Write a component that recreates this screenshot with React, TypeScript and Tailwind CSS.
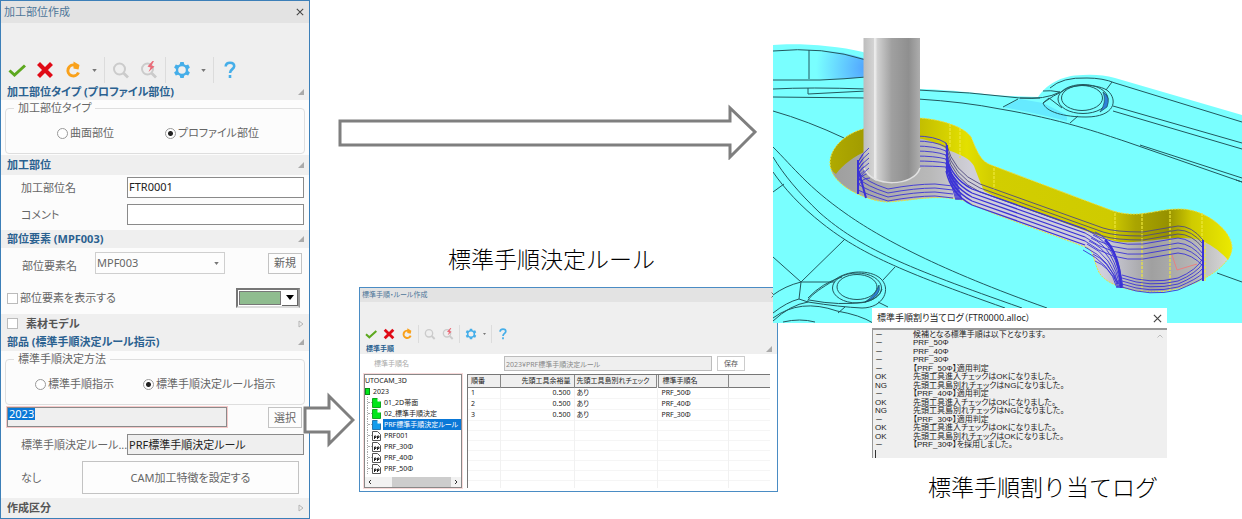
import { clsx } from "clsx";
import type { FC, ReactNode } from "react";

const ICON_BUTTON = "flex shrink-0 items-center justify-center";

type IconProps = { className: string };

const CheckIcon: FC<IconProps> = ({ className }) => (
  <svg viewBox="0 0 18 18" className={className} fill="none" stroke="#5da81f" strokeWidth="3">
    <path d="M1.5 9.5 6.5 14 17 4.5" />
  </svg>
);

const CrossIcon: FC<IconProps> = ({ className }) => (
  <svg viewBox="0 0 18 18" className={className} fill="none" stroke="#e00a16" strokeWidth="4.2">
    <path d="M4 4 14 14M14 4 4 14" strokeLinecap="square" />
  </svg>
);

const RedoIcon: FC<IconProps> = ({ className }) => (
  <svg viewBox="0 0 18 18" className={className}>
    <path d="M11 4.2A5.500 5.500 0 1 0 14.500 11.500" fill="none" stroke="#f9a11b" strokeWidth="3" />
    <path d="M9.5 0.5 15.500 4 14.500 8.500 9.5 7.500Z" fill="#f9a11b" />
  </svg>
);

const SearchIcon: FC<IconProps & { bolt?: boolean }> = ({ className, bolt }) => (
  <svg viewBox="0 0 18 18" className={className} fill="none" stroke="#cbcbcb">
    <circle cx="7.5" cy="8" r="5.5" strokeWidth="2" />
    <path d="M11.5 12 16 16.500" strokeWidth="2.8" />
    {bolt && (
      <path d="M12.5 0 7.5 5.5 10.5 6.5 8.5 11 14.5 5.5 11.5 4.5 14 0Z" fill="#ea6b78" stroke="none" />
    )}
  </svg>
);

const GearIcon: FC<IconProps> = ({ className }) => (
  <svg viewBox="0 0 18 18" className={className} fill="#45aee9" fillRule="evenodd">
    <path d="M7.3 1h3.4l.5 2.3 1.7 1 2.3-.8 1.7 2.9-1.8 1.6v2l1.8 1.6-1.7 2.9-2.3-.8-1.7 1-.5 2.3H7.3l-.5-2.3-1.7-1-2.3.8-1.7-2.9L2.9 10V8L1.1 6.4l1.7-2.9 2.3.8 1.7-1zM9 5.2a3.8 3.8 0 1 0 0 7.6 3.8 3.8 0 0 0 0-7.6z" />
  </svg>
);

const HelpIcon: FC<IconProps> = ({ className }) => (
  <svg viewBox="0 0 18 18" className={className} fill="none" stroke="#45aee9" strokeWidth="2.6">
    <path d="M4.7 5.5C4.7 2.8 6.6 1.8 9 1.8s4.2 1.3 4.2 3.5C13.2 8.2 9 8.2 9 12" />
    <path d="M9 14v3" />
  </svg>
);

const Caret: FC<IconProps> = ({ className }) => (
  <svg viewBox="0 0 6 4" className={className} fill="#777">
    <path d="M0 0H6L3 4Z" />
  </svg>
);

const CloseIcon: FC<IconProps> = ({ className }) => (
  <svg viewBox="0 0 10 10" className={className} fill="none" stroke="#444" strokeWidth="1.3">
    <path d="M1 1 9 9M9 1 1 9" />
  </svg>
);

const Toolbar: FC<{ small?: boolean }> = ({ small }) => {
  const icon = small ? "size-3" : "size-[18px]";
  const group = clsx("flex h-full items-center", small ? "gap-[6px] px-[5px]" : "gap-[10px] px-[7px]");
  const divided = "border-l border-[#dcdcdc]";
  return (
    <div className={clsx("flex items-end", small ? "h-[41px]" : "h-[60px]")}>
      <div className={clsx("flex", small ? "h-[18px]" : "h-[26px]")}>
        <div className={group}>
          <button aria-label="OK" className={ICON_BUTTON}><CheckIcon className={icon} /></button>
          <button aria-label="Cancel" className={ICON_BUTTON}><CrossIcon className={icon} /></button>
          <button aria-label="Redo" className={ICON_BUTTON}><RedoIcon className={icon} /></button>
          {!small && <Caret className="h-[3px] w-[5px]" />}
        </div>
        <div className={clsx(group, divided)}>
          <button aria-label="Search" className={ICON_BUTTON}><SearchIcon className={icon} /></button>
          <button aria-label="Quick search" className={ICON_BUTTON}><SearchIcon className={icon} bolt /></button>
        </div>
        <div className={clsx(group, divided)}>
          <button aria-label="Settings" className={ICON_BUTTON}><GearIcon className={icon} /></button>
          <Caret className={small ? "h-[2px] w-[3px]" : "h-[3px] w-[5px]"} />
        </div>
        <div className={clsx(group, divided)}>
          <button aria-label="Help" className={ICON_BUTTON}><HelpIcon className={icon} /></button>
        </div>
      </div>
    </div>
  );
};

type SectionHeaderProps = { className: string; closed?: boolean; children: ReactNode };

const SectionHeader: FC<SectionHeaderProps> = ({ className, closed, children }) => (
  <div className={clsx("flex items-center justify-between bg-[#efefef] pr-[5px] pl-[6px]", className)}>
    <h3 className={clsx("flex items-center font-bold", closed ? "text-[#555]" : "text-[#2a6190]")}>
      {children}
    </h3>
    {closed ? (
      <svg viewBox="0 0 6 8" className="h-2 w-[6px]" fill="none" stroke="#b5b5b5">
        <path d="M1 1 5 4 1 7Z" />
      </svg>
    ) : (
      <svg viewBox="0 0 6 6" className="size-[6px]" fill="#aaa">
        <path d="M6 0V6H0Z" />
      </svg>
    )}
  </div>
);

const RadioGroup: FC<{ legend: string; name: string; options: string[]; indent: string }> = ({
  legend,
  name,
  options,
  indent,
}) => (
  <fieldset className="mx-1 h-[54px] rounded-sm border border-[#dedede]">
    <legend className="ml-2 px-1 leading-4">{legend}</legend>
    <div className={clsx("grid h-[34px] grid-cols-[108px_auto] items-center", indent)}>
      {options.map((option, i) => (
        <label key={option} className="flex items-center gap-[2px] whitespace-nowrap">
          <input
            type="radio"
            name={name}
            defaultChecked={i === 1}
            className="size-[11px] appearance-none rounded-full border border-[#999] bg-white checked:bg-[radial-gradient(circle,#222_0_2px,#fff_3px)]"
          />
          {option}
        </label>
      ))}
    </div>
  </fieldset>
);

const FIELD = "h-[21px] min-w-0 border border-[#8a8a8a] px-[1px] pb-[2px] text-[#222]";
const BUTTON = "border border-[#c3c3c3] bg-[#fdfdfd]";

const FeatureDialog: FC = () => (
  <section className="flex flex-col border border-[#3c7fb8] bg-[#fcfcfc] text-[11px] leading-4 text-[#666]">
    <header className="flex h-[22px] items-center justify-between bg-[#e3e3e3] pr-[5px] pl-[3px]">
      <h2 className="text-[#4d7699]">加工部位作成</h2>
      <button aria-label="Close"><CloseIcon className="size-2" /></button>
    </header>
    <div className="bg-[#efefef]"><Toolbar /></div>

    <SectionHeader className="h-[17px]">加工部位タイプ (プロファイル部位)</SectionHeader>
    <div className="pb-[1px]">
      <RadioGroup legend="加工部位タイプ" name="feature-type" options={["曲面部位", "プロファイル部位"]} indent="pl-[51px]" />
    </div>

    <SectionHeader className="h-5">加工部位</SectionHeader>
    <div className="flex flex-col gap-[6px] pt-[2px] pr-[5px] pb-[5px] pl-5">
      <div className="flex items-center">
        <label htmlFor="feature-name" className="w-[106px]">加工部位名</label>
        <input id="feature-name" defaultValue="FTR0001" className={clsx(FIELD, "flex-1 bg-white")} />
      </div>
      <div className="flex items-center">
        <label htmlFor="comment" className="w-[106px]">コメント</label>
        <input id="comment" className={clsx(FIELD, "flex-1 bg-white")} />
      </div>
    </div>

    <SectionHeader className="h-[18px]">部位要素 (MPF003)</SectionHeader>
    <div className="flex flex-col gap-[14px] pt-1 pr-[7px] pb-[6px] pl-[6px]">
      <div className="flex h-[22px] items-center justify-between">
        <label htmlFor="element-name" className="w-[74px] pt-[6px] pl-[15px] whitespace-nowrap">部位要素名</label>
        <div className="relative mr-auto ml-[14px]">
          <select id="element-name" className="h-[22px] w-[130px] appearance-none border border-[#cfcfcf] bg-[#fdfdfd] px-[1px]">
            <option>MPF003</option>
          </select>
          <Caret className="pointer-events-none absolute top-[10px] right-[6px] h-[3px] w-[5px]" />
        </div>
        <button className={clsx(BUTTON, "h-[21px] w-[34px]")}>新規</button>
      </div>
      <div className="flex h-5 items-center justify-between">
        <label className="flex items-center gap-[2px]">
          <input type="checkbox" className="size-[11px] appearance-none border border-[#bbb] bg-white" />
          部位要素を表示する
        </label>
        <button
          aria-label="Colour"
          className="mr-[2px] flex h-5 w-16 items-stretch border-2 border-t-[#777] border-r-[#999] border-b-[#ddd] border-l-[#777] bg-white"
        >
          <span className="m-[1px] flex-1 border border-[#777] bg-[#8fbc8f]" />
          <span className="flex w-4 items-center justify-center border-r border-b border-[#666]">
            <svg viewBox="0 0 8 5" className="h-[5px] w-2"><path d="M0 0H8L4 5Z" /></svg>
          </span>
        </button>
      </div>
    </div>

    <SectionHeader className="h-[19px]" closed>
      <label className="flex items-center gap-2">
        <input type="checkbox" className="size-[11px] appearance-none border border-[#bbb] bg-white" />
        素材モデル
      </label>
    </SectionHeader>
    <SectionHeader className="h-[18px]">部品 (標準手順決定ルール指示)</SectionHeader>
    <div className="pb-1">
      <RadioGroup
        legend="標準手順決定方法"
        name="method"
        options={["標準手順指示", "標準手順決定ルール指示"]}
        indent="pl-[29px]"
      />
      <div className="mt-[2px] flex h-5 justify-between pr-[7px] pl-[6px]">
        <div className="flex h-5 w-[220px] items-start border border-[#8a8a8a] bg-[#efefef] outline outline-[#f6c9c9]">
          <input
            aria-label="Folder"
            defaultValue="2023"
            className="h-3 w-[27px] bg-[#0a78d7] px-[1px] text-white"
          />
        </div>
        <button className={clsx(BUTTON, "h-[21px] w-[34px]")}>選択</button>
      </div>
      <div className="mt-[7px] flex items-center pr-[5px] pl-5">
        <label htmlFor="rule-name" className="w-[106px] whitespace-nowrap">標準手順決定ルール...</label>
        <input id="rule-name" readOnly value="PRF標準手順決定ルール" className={clsx(FIELD, "flex-1 bg-[#efefef]")} />
      </div>
      <div className="mt-[6px] flex items-center justify-between pr-[10px] pl-5">
        <span>なし</span>
        <button className={clsx(BUTTON, "h-[33px] w-[217px]")}>CAM加工特徴を設定する</button>
      </div>
    </div>
    <SectionHeader className="h-5" closed>作成区分</SectionHeader>
  </section>
);

const treeItems = [
  { label: "01_2D帯面", kind: "folder" },
  { label: "02_標準手順決定", kind: "folder" },
  { label: "PRF標準手順決定ルール", kind: "rule" },
  { label: "PRF001", kind: "pp" },
  { label: "PRF_30Φ", kind: "pp" },
  { label: "PRF_40Φ", kind: "pp" },
  { label: "PRF_50Φ", kind: "pp" },
];

const FileIcon: FC<{ kind: string }> = ({ kind }) => (
  <svg viewBox="0 0 9 10" className="h-[10px] w-[9px] shrink-0">
    <path
      d="M.5.5H5.5L8.5 3.5V9.5H.5Z"
      fill={kind === "folder" ? "#00e61a" : kind === "rule" ? "#149ceb" : "#fff"}
      stroke={kind === "folder" ? "#11a51e" : kind === "rule" ? "#2776ad" : "#555"}
    />
    {kind === "pp" && <path d="M2.5 8V5H4V6.5H2.5M5.5 8V5H7V6.5H5.5" fill="none" stroke="#222" />}
    {kind !== "pp" && <path d="M5.5 0V3.5H9Z" fill="#fff" />}
  </svg>
);

const rows = [
  ["1", "0.500", "あり", "PRF_50Φ"],
  ["2", "0.500", "あり", "PRF_40Φ"],
  ["3", "0.500", "あり", "PRF_30Φ"],
];

const RuleDialog: FC = () => (
  <section className="mt-3 -mr-[5px] ml-[49px] border border-[#4a8cc4] bg-white text-[7px] leading-[10px] text-[#222]">
    <header className="flex h-[14px] items-center justify-between bg-[#e3e3e3] pl-[2px]">
      <h2 className="text-[#4d7699]">標準手順・ルール作成</h2>
      <button aria-label="Close"><CloseIcon className="size-[6px]" /></button>
    </header>
    <div className="bg-[#efefef]"><Toolbar small /></div>
    <SectionHeader className="h-[11px]">標準手順</SectionHeader>
    <div className="flex items-center pt-[2px] pr-8 pl-[14px] text-[#888]">
      <label htmlFor="procedure" className="w-[130px] text-[#aaa]">標準手順名</label>
      <input
        id="procedure"
        readOnly
        value="2023¥PRF標準手順決定ルール"
        className="h-[15px] min-w-0 flex-1 border border-[#bcbcbc] bg-[#efefef] px-[1px]"
      />
      <button className="ml-[5px] h-[15px] w-7 border border-[#ccc] text-[#555]">保存</button>
    </div>
    <div className="flex h-[120px] gap-[5px] pt-[3px] pr-[7px] pb-[3px] pl-1">
      <div className="flex w-[98px] shrink-0 flex-col overflow-hidden border border-[#888] outline outline-[#f8dada]">
        <ul className="flex-1 leading-[11px] whitespace-nowrap">
          <li>UTOCAM_3D</li>
          <li className="flex items-center gap-[3px]">
            <span className="h-[7px] w-[5px] border border-[#0b8a14] bg-[#00e61a]" />
            2023
          </li>
          {treeItems.map(({ label, kind }) => (
            <li key={label} className="ml-[2px] flex items-center border-l border-dotted border-[#aaa]">
              <span className="w-1 shrink-0 border-t border-dotted border-[#aaa]" />
              <FileIcon kind={kind} />
              <span className={clsx("ml-[2px] pl-[1px]", kind === "rule" && "flex-1 bg-[#0a78d7] text-white")}>
                {label}
              </span>
            </li>
          ))}
        </ul>
        <div className="flex h-[10px] items-stretch bg-[#f2f2f2]">
          <svg viewBox="0 0 10 10" className="size-[10px]" fill="none" stroke="#333"><path d="M6 3 4 5 6 7" /></svg>
          <span className="ml-[17px] flex-1 bg-[#cdcdcd]" />
          <svg viewBox="0 0 10 10" className="size-[10px]" fill="none" stroke="#333"><path d="M4 3 6 5 4 7" /></svg>
        </div>
      </div>
      <div className="min-w-0 flex-1 overflow-hidden border-t border-l border-[#777]">
        <table className="w-full table-fixed">
          <thead className="h-[12px] bg-[#efefef] text-left whitespace-nowrap">
            <tr className="border-b border-[#777]">
              <th className="w-8 border-r border-[#888] p-0 pl-[3px] font-normal">順番</th>
              <th className="w-[74px] border-r border-[#888] p-0 pr-[3px] text-right font-normal">先頭工具余裕量</th>
              <th className="w-[83px] border-r-3 border-double border-[#888] p-0 pl-[2px] font-normal">先頭工具島別れチェック</th>
              <th className="w-[71px] border-r border-[#888] p-0 pl-[4px] font-normal">標準手順名</th>
              <th className="p-0" />
            </tr>
          </thead>
          <tbody>
            {Array.from({ length: 10 }, (_, i) => (
              <tr key={i} className="h-[10px] border-b border-[#f5f5f5]">
                <td className="border-r border-[#f1f1f1] p-0 pl-[3px]">{rows[i]?.[0]}</td>
                <td className="border-r border-[#f1f1f1] p-0 pr-[3px] text-right">{rows[i]?.[1]}</td>
                <td className="border-r border-[#f1f1f1] p-0 pl-[2px]">{rows[i]?.[2]}</td>
                <td className="border-r border-[#f1f1f1] p-0 pl-[4px]">{rows[i]?.[3]}</td>
                <td className="p-0" />
              </tr>
            ))}
          </tbody>
        </table>
      </div>
    </div>
  </section>
);

const POCKET =
  "M830 163C830 148 845 134 863 129C885 118 905 116 920 118C945 120 965 128 971 137C977 151 980 161 991 165L1113 211C1140 219 1155 209 1180 209C1205 209 1232 230 1232 248C1231 268 1190 292 1153 292C1125 292 1102 282 1098 270C1094 262 1094 252 1088 248L1000 216C978 208 966 200 957 199C930 195 910 201 887 202C866 201 830 185 830 163Z";
const WALL =
  "M830 163C830 148 845 134 863 129C885 118 905 116 920 118C945 120 965 128 971 137C977 151 980 161 991 165L1113 211C1140 219 1155 209 1180 209C1205 209 1232 230 1232 248Q1232 254 1228 260Q1214 244 1196 239C1175 236 1160 240 1133 242Q1114 243 1105 238L1000 199L984 191Q978 177 974 166C968 155 950 152 945 148Q930 139 915 138C880 142 850 155 836 174Q830 170 830 163Z";

// Machined part with the profile pocket, the tool and its paths
const PartView: FC = () => (
  <svg viewBox="773 38 469 285" className="relative block h-auto w-full" role="img" aria-label="3D">
    <defs>
      <linearGradient id="wall" gradientUnits="userSpaceOnUse" x1="830" x2="1232" y1="0" y2="0">
        <stop offset="0" stopColor="#b0aa00" />
        <stop offset=".1" stopColor="#9f9900" />
        <stop offset=".22" stopColor="#c2bd00" />
        <stop offset=".34" stopColor="#e3e000" />
        <stop offset=".4" stopColor="#d2ce00" />
        <stop offset=".7" stopColor="#cfcb00" />
        <stop offset=".76" stopColor="#aaa500" />
        <stop offset=".84" stopColor="#969100" />
        <stop offset=".9" stopColor="#cfcb00" />
        <stop offset="1" stopColor="#ebe900" />
      </linearGradient>
      <linearGradient id="floor" gradientUnits="userSpaceOnUse" x1="830" x2="1232" y1="0" y2="0">
        <stop offset="0" stopColor="#9d9d9d" />
        <stop offset=".25" stopColor="#b9b9b9" />
        <stop offset=".35" stopColor="#d0cfd8" />
        <stop offset=".68" stopColor="#cfcfdc" />
        <stop offset=".8" stopColor="#a0a0a0" />
        <stop offset=".9" stopColor="#b4b4b4" />
        <stop offset="1" stopColor="#dadada" />
      </linearGradient>
      <linearGradient id="tool">
        <stop offset="0" stopColor="#bdbdbd" />
        <stop offset=".18" stopColor="#d3d3d3" />
        <stop offset=".2" stopColor="#f2f2f2" />
        <stop offset=".25" stopColor="#d0d0d0" />
        <stop offset=".5" stopColor="#a0a0a0" />
        <stop offset=".8" stopColor="#8f8f8f" />
        <stop offset="1" stopColor="#adadad" />
      </linearGradient>
      <radialGradient id="shade" gradientUnits="userSpaceOnUse" cx="868" cy="68" r="52">
        <stop offset="0" stopColor="#4f9fff" />
        <stop offset="1" stopColor="#79ffff" />
      </radialGradient>
    </defs>
    <path
      d="M773 45C795 43 835 45 863 52L920 89C960 90 985 95 1010 96L1038 97C1045 86 1060 75 1083 75Q1100 74 1115 78L1242 115V323H773Z"
      fill="#79ffff"
    />
    <path d="M809 50Q840 50 866 59V77Q840 80 809 79Z" fill="url(#shade)" />
    <path d="M1003 107 1020 99 1043 103 1067 115V121Q1030 112 1003 107Z" fill="#66eaff" />

    <g fill="none" stroke="#22585e" strokeWidth="1">
      <path d="M773 51Q823 46 866 60M809 50V79M773 80H820Q845 79 866 77M773 89Q810 87 866 89M808 88V94L866 91M773 97 866 98" />
      <path d="M918 90Q970 92 1020 98H1040M918 99Q965 102 1000 109C1060 119 1100 133 1127 142L1242 182M1140 145 1242 178M1003 107 1018 99" />
      <path d="M1020 98Q1045 100 1060 92Q1050 90 1043 91M1050 88Q1062 77 1087 78Q1103 78 1115 83L1242 122M1112 82 1106 90M1113 106 1242 143M1113 111 1242 149M1078 116 1070 123" />
      <path d="M1043 103Q1054 95 1063 91C1072 83 1100 84 1108 91C1118 100 1115 117 1086 117C1064 117 1046 112 1043 103ZM1043 103 1049 98 1062 108" />
      <ellipse cx="1082" cy="98" rx="20.5" ry="12.5" />
      <ellipse cx="1083" cy="99" rx="25" ry="14.5" />
      <path d="M773 111Q808 121 844 138M773 192 784 184" />
      <path d="M773 147C794 168 808 187 845 213C880 238 940 270 1047 308" />
      <path d="M773 157C784 175 798 192 820 213C860 248 905 267 1022 308" />
      <path d="M773 172C784 188 800 206 823 224C860 253 900 271 1005 308" />
      <path d="M845 239 801 282 773 257M801 282 799 299M801 282H835M773 295Q785 286 801 282M895 267 883 280" />
      <path d="M808 300C812 294 823 287 833 281C848 269 870 270 880 278C892 288 884 308 862 308Q840 307 808 302Z" />
      <path d="M808 298Q822 283 842 277M809 300Q840 306 865 302Q880 298 882 289" />
      <ellipse cx="857" cy="287" rx="20" ry="12.5" />
      <ellipse cx="857" cy="288" rx="24.5" ry="15" />
      <path d="M773 313Q787 302 799 299L808 302M773 318Q800 298 837 311Q860 315 873 323M773 321Q790 305 808 302M783 322Q800 318 815 322M845 307 838 313M878 302 888 307" />
      <path d="M1217 273 1242 282M1236 180 1242 182" />
    </g>
    <path d="M1103 92Q1111 97 1107 107L1100 112Q1107 102 1103 92ZM879 285Q882 296 865 302Q876 295 879 285Z" fill="#2f80d8" stroke="#123f45" strokeWidth=".6" />

    <path d={POCKET} fill="url(#floor)" />
    <path d={WALL} fill="url(#wall)" />
    <path d={POCKET} fill="none" stroke="#e8e43c" strokeWidth="1" strokeDasharray="2 1" />
    <path
      d="M950 124V148M960 128V158M994 168V190M1115 213V240M1142 214V291M1170 211V291M1202 213V240M1205 242V281"
      stroke="#eee83a"
      strokeWidth="1.2"
      strokeDasharray="3 1"
    />

    <g fill="none" stroke="#4f4a80" strokeWidth=".9">
      {[0, 1, 2].map((i) => (
        <path
          key={i}
          d={`M946 ${143 + i * 4}Q953 ${172 + i * 4} 980 ${184 + i * 4}L1103 ${228 + i * 4}Q1115 ${232 + i * 4} 1143 ${232 + i * 4}L1178 ${226 + i * 4}Q1192 ${226 + i * 4} 1203 ${240 + i * 4}`}
        />
      ))}
    </g>
    <g fill="none" stroke="#3a32d6" strokeWidth=".9">
      {[0, 1, 2, 3, 4, 5, 6].map((i) => (
        <g key={i}>
          <path d={`M915 ${136 + i * 5}Q935 ${136 + i * 5} 946 ${143 + i * 4}L${950 + i} 180L${956 + i} 200`} />
          <path d={`M858 ${162 + i * 4}Q862 ${154 + i * 4} 870 ${148 + i * 5}`} />
          <path d={`M${1095 - i * 2} ${232 + i * 3}Q${1117 - i} ${240 + i * 4} ${1123 - i} 288`} />
        </g>
      ))}
      {[0, 1, 2, 3, 4].map((i) => (
        <g key={i}>
          <path
            d={`M946 ${155 + i * 4}Q951 ${178 + i * 4} 972 ${189 + i * 4}L1085 ${229 + i * 4}`}
            strokeWidth="1.3"
          />
          <path d={`M1122 ${275 + i * 3}Q1150 ${285 + i * 3} 1178 ${278 + i * 3}Q1197 ${270 + i * 3} 1203 ${258 + i * 5}`} />
        </g>
      ))}
      {[0, 1, 2, 3].map((i) => (
        <g key={i}>
          <path d={`M1085 ${229 + i * 4}Q1112 ${247 + i * 5} 1143 ${244 + i * 5}L1178 ${238 + i * 5}Q1192 ${239 + i * 5} 1203 ${254 + i * 4}`} />
          <path d={`M858 ${172 + i * 6}Q866 ${182 + i * 4} 888 ${189 + i * 4}Q915 ${184 + i * 4} 935 ${184 + i * 4}L953 ${186 + i * 4}`} />
        </g>
      ))}
      <path d="M858 160V194M859 172 866 198M947 145V172M1203 240V281" strokeWidth="2" />
      <path d="M1105 240Q1120 255 1121 288" strokeWidth="2.5" />
      <path d="M1093 254Q1107 260 1119 284M1095 261Q1108 266 1118 284" />
    </g>
    <path d="M1172 255 1177 270 1197 264" fill="none" stroke="#e98080" />

    <path d="M863.5 38H920V168C914 187 873 188 866 172Q863 168 863.5 165Z" fill="url(#tool)" />
    <path d="M864 168C872 188 914 187 920 168" fill="none" stroke="#e2e2e2" strokeWidth="1.5" />
    <path
      d="M858 162Q862 153 869 148M858 166Q862 158 869 153M858 170Q862 163 869 158M858 174Q862 168 869 163M859 180Q862 173 869 168"
      fill="none"
      stroke="#3a32d6"
      strokeWidth=".9"
    />
  </svg>
);

const logLines = [
  ["－", "候補となる標準手順は以下となります。"],
  ["－", "PRF_50Φ"],
  ["－", "PRF_40Φ"],
  ["－", "PRF_30Φ"],
  ["－", "【PRF_50Φ】適用判定"],
  ["OK", "先頭工具進入チェックはOKになりました。"],
  ["NG", "先頭工具島別れチェックはNGになりました。"],
  ["－", "【PRF_40Φ】適用判定"],
  ["OK", "先頭工具進入チェックはOKになりました。"],
  ["NG", "先頭工具島別れチェックはNGになりました。"],
  ["－", "【PRF_30Φ】適用判定"],
  ["OK", "先頭工具進入チェックはOKになりました。"],
  ["OK", "先頭工具島別れチェックはOKになりました。"],
  ["－", "【PRF_30Φ】を採用しました。"],
];

const LogWindow: FC = () => (
  <section className="relative -mt-[15px] mr-[75px] ml-[99px] flex h-[150px] flex-col bg-white text-[#222]">
    <header className="flex h-5 items-center justify-between pr-[5px] pl-[5px] text-[9px]">
      <h2>標準手順割り当てログ（FTR0000.alloc）</h2>
      <button aria-label="Close"><CloseIcon className="size-[9px]" /></button>
    </header>
    <div
      role="log"
      className="relative grid flex-1 auto-rows-fr border-t-2 border-l border-[#999] bg-[#efefef] pt-[1px] pl-[2px] font-['Liberation_Sans','Noto_Sans_CJK_JP',sans-serif] text-[8px] leading-[8px]"
    >
      {logLines.map(([status, text], i) => (
        <p key={i} className="grid grid-cols-[38px_1fr] whitespace-nowrap">
          <span>{status}</span>
          <span>{text}</span>
        </p>
      ))}
      <span className="h-[8px] w-[1px] bg-[#333]" />
      <svg viewBox="0 0 6 4" className="absolute top-1 right-1 h-1 w-[6px]" fill="none" stroke="#bbb">
        <path d="M.5 3.5 3 1 5.5 3.5" />
      </svg>
    </div>
  </section>
);

const App: FC = () => {
  return (
    <main className="grid min-h-screen grid-cols-[310px_463fr_469fr] items-start bg-white font-['Noto_Sans','Noto_Sans_CJK_JP',sans-serif] [font-feature-settings:'palt']">
      <div className="relative z-10">
        <FeatureDialog />
        <svg viewBox="0 0 52 58" className="absolute top-[391px] left-[303px] h-[58px] w-[52px]" fill="#fff" stroke="#7f7f7f" strokeWidth="3">
          <path d="M2 17H26V5L50 29 26 53V41H2Z" />
        </svg>
      </div>

      <div className="pt-[104px]">
        <div className="pr-4 pl-7">
          <svg viewBox="0 0 419 56" className="block h-auto w-full" fill="#fff" stroke="#7f7f7f" strokeWidth="3">
            <path d="M2 17H392V4L417 28 392 53V41H2Z" />
          </svg>
        </div>
        <p className="mt-[83px] pl-5 text-center text-[23px] leading-8 font-light text-black [font-feature-settings:normal]">
          標準手順決定ルール
        </p>
        <RuleDialog />
      </div>

      <div className="pt-[38px]">
        <PartView />
        <LogWindow />
        <p className="mt-[13px] pl-[71px] text-center text-[23px] leading-8 font-light text-black [font-feature-settings:normal]">
          標準手順割り当てログ
        </p>
      </div>
    </main>
  );
};

export default App;
